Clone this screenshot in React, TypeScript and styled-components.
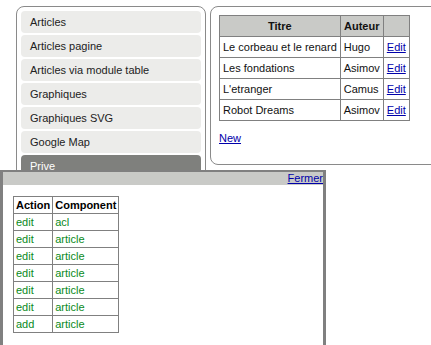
import React from "react";
import styled, { createGlobalStyle } from "styled-components";

const GlobalStyle = createGlobalStyle`
  html, body {
    margin: 0;
    padding: 0;
    background: #ffffff;
  }
  body {
    font-family: "Liberation Sans", Arial, sans-serif;
    font-size: 11px;
    color: #111;
  }
`;

const menu = [
  "Articles",
  "Articles pagine",
  "Articles via module table",
  "Graphiques",
  "Graphiques SVG",
  "Google Map",
  "Prive",
];

const books = [
  { titre: "Le corbeau et le renard", auteur: "Hugo" },
  { titre: "Les fondations", auteur: "Asimov" },
  { titre: "L'etranger", auteur: "Camus" },
  { titre: "Robot Dreams", auteur: "Asimov" },
];

const rights = [
  ["edit", "acl"],
  ["edit", "article"],
  ["edit", "article"],
  ["edit", "article"],
  ["edit", "article"],
  ["edit", "article"],
  ["add", "article"],
];

export default function App() {
  return (
    <>
      <GlobalStyle />
      <Page>
        <SidePanel>
          {menu.map((label) => (
            <MenuItem key={label} $active={label === "Prive"}>
              {label}
            </MenuItem>
          ))}
        </SidePanel>

        <ContentPanel>
          <BookTable>
            <thead>
              <tr>
                <HeadCell>Titre</HeadCell>
                <HeadCell>Auteur</HeadCell>
                <HeadCell />
              </tr>
            </thead>
            <tbody>
              {books.map((b) => (
                <tr key={b.titre}>
                  <Cell>{b.titre}</Cell>
                  <Cell>{b.auteur}</Cell>
                  <Cell>
                    <Link href="#">Edit</Link>
                  </Cell>
                </tr>
              ))}
            </tbody>
          </BookTable>
          <NewLine>
            <Link href="#">New</Link>
          </NewLine>
        </ContentPanel>
      </Page>

      {/* fenetre flottante par-dessus la page */}
      <Popup>
        <PopupBar>
          <Link href="#">Fermer</Link>
        </PopupBar>
        <RightsTable>
          <thead>
            <tr>
              <RightsHead>Action</RightsHead>
              <RightsHead>Component</RightsHead>
            </tr>
          </thead>
          <tbody>
            {rights.map(([action, component], i) => (
              <tr key={i}>
                <RightsCell>{action}</RightsCell>
                <RightsCell>{component}</RightsCell>
              </tr>
            ))}
          </tbody>
        </RightsTable>
      </Popup>
    </>
  );
}

const Page = styled.div`
  display: flex;
  flex-direction: row;
  align-items: flex-start;
  gap: 4px;
  width: 560px;
  padding: 6px 0 0 16px;
`;

const SidePanel = styled.div`
  flex: none;
  width: 190px;
  box-sizing: border-box;
  padding: 4px;
  border: 1px solid #8a8a8a;
  border-radius: 8px;

  display: flex;
  flex-direction: column;
  gap: 2px;
`;

const MenuItem = styled.div<{ $active?: boolean }>`
  height: 22px;
  line-height: 22px;
  padding-left: 9px;
  border-radius: 4px;
  background-color: ${(p) => (p.$active ? "#7f807d" : "#ececea")};
  color: ${(p) => (p.$active ? "#ffffff" : "#222222")};
  white-space: nowrap;
`;

const ContentPanel = styled.div`
  flex: none;
  width: 340px;
  box-sizing: border-box;
  padding: 8px;
  border: 1px solid #8a8a8a;
  border-radius: 8px;
`;

const BookTable = styled.table`
  border-collapse: collapse;
  font-size: 11px;
`;

const HeadCell = styled.th`
  height: 12px;
  line-height: 12px;
  padding: 4px 3px;
  border: 1px solid #808080;
  background-color: #c9cac7;
  font-weight: bold;
  text-align: center;
`;

const Cell = styled.td`
  height: 12px;
  line-height: 12px;
  padding: 4px 3px;
  border: 1px solid #808080;
  white-space: nowrap;
`;

const Link = styled.a`
  color: #0000aa;
  text-decoration: underline;
`;

const NewLine = styled.div`
  margin: 11px 0;
  line-height: 13px;
`;

const Popup = styled.div`
  position: absolute;
  left: 0;
  top: 170px;
  width: 320px;
  height: 200px;
  background: #ffffff;
  border: 3px solid #808080;
  border-top-width: 2px;
`;

const PopupBar = styled.div`
  height: 13px;
  line-height: 13px;
  background-color: #c9cac7;
  text-align: right;
`;

const RightsTable = styled.table`
  margin: 11px 0 0 10px;
  border-collapse: collapse;
  font-size: 11px;
`;

const RightsHead = styled.th`
  line-height: 14px;
  padding: 1px 2px;
  border: 1px solid #808080;
  text-align: left;
  font-weight: bold;
  color: #000;
`;

const RightsCell = styled.td`
  line-height: 14px;
  padding: 1px 2px;
  border: 1px solid #808080;
  color: #0a8a1a;
`;
